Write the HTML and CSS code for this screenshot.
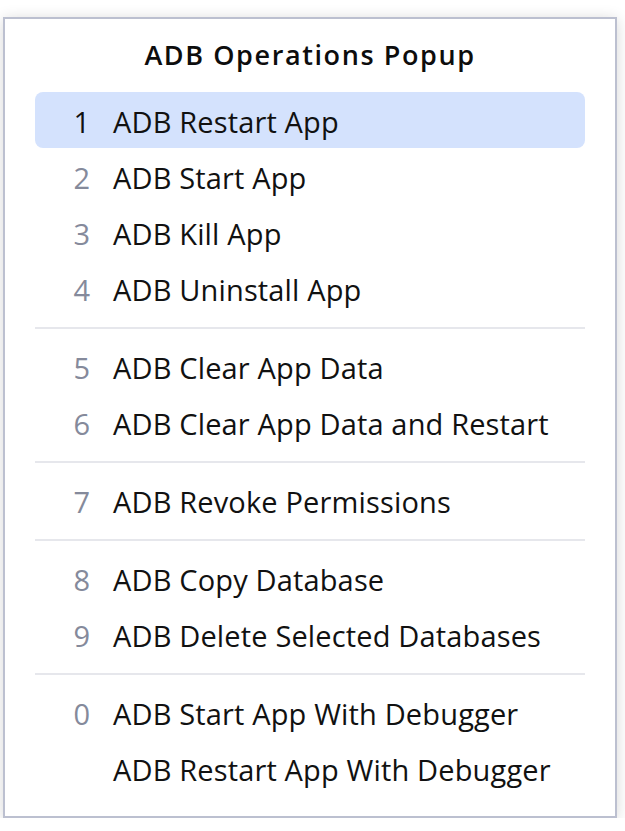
FILE: index.html
```html
<!DOCTYPE html>
<html>
<head>
<meta charset="utf-8">
<link rel="stylesheet" href="styles.css">
</head>
<body>
<div class="popup">
  <div class="title">ADB Operations Popup</div>
  <div class="group">
    <div class="item selected"><span class="num">1</span><span class="label">ADB Restart App</span></div>
    <div class="item"><span class="num">2</span><span class="label">ADB Start App</span></div>
    <div class="item"><span class="num">3</span><span class="label">ADB Kill App</span></div>
    <div class="item"><span class="num">4</span><span class="label">ADB Uninstall App</span></div>
  </div>
  <div class="divider"></div>
  <div class="group">
    <div class="item"><span class="num">5</span><span class="label">ADB Clear App Data</span></div>
    <div class="item"><span class="num">6</span><span class="label">ADB Clear App Data and Restart</span></div>
  </div>
  <div class="divider"></div>
  <div class="group">
    <div class="item"><span class="num">7</span><span class="label">ADB Revoke Permissions</span></div>
  </div>
  <div class="divider"></div>
  <div class="group">
    <div class="item"><span class="num">8</span><span class="label">ADB Copy Database</span></div>
    <div class="item"><span class="num">9</span><span class="label">ADB Delete Selected Databases</span></div>
  </div>
  <div class="divider"></div>
  <div class="group">
    <div class="item"><span class="num">0</span><span class="label">ADB Start App With Debugger</span></div>
    <div class="item"><span class="num"></span><span class="label">ADB Restart App With Debugger</span></div>
  </div>
</div>
</body>
</html>
```

FILE: styles.css
```css
html, body {
  margin: 0;
  padding: 0;
  background: #ffffff;
}

body {
  font-family: "Open Sans", "Noto Sans", sans-serif;
  color: #111111;
}

.popup {
  box-sizing: border-box;
  margin: 17px 0 0 3px;
  width: 614px;
  height: 801px;
  border: 2px solid #bcc0d0;
  background: #ffffff;
  box-shadow: 0 2px 14px rgba(0, 0, 0, 0.16);
  padding: 18px 30px 0 30px;
}

.title {
  text-align: center;
  font-size: 27px;
  font-weight: 600;
  letter-spacing: 1.6px;
  line-height: 36px;
  margin-bottom: 19px;
  color: #0d0d0d;
}

.group {
  display: flex;
  flex-direction: column;
}

.item {
  box-sizing: border-box;
  display: flex;
  align-items: center;
  height: 56px;
  padding: 3px 0 0 20px;
  border-radius: 8px;
  font-size: 29px;
  letter-spacing: 0.15px;
}

.item.selected {
  background: #d4e2fd;
}

.num {
  width: 35px;
  text-align: right;
  color: #858a9b;
  margin-right: 23px;
  flex-shrink: 0;
  letter-spacing: 0;
}

.item.selected .num {
  color: #111111;
}

.label {
  white-space: nowrap;
}

.divider {
  height: 2px;
  background: #e6e7ec;
  margin: 11px 0 9px 0;
}
```
